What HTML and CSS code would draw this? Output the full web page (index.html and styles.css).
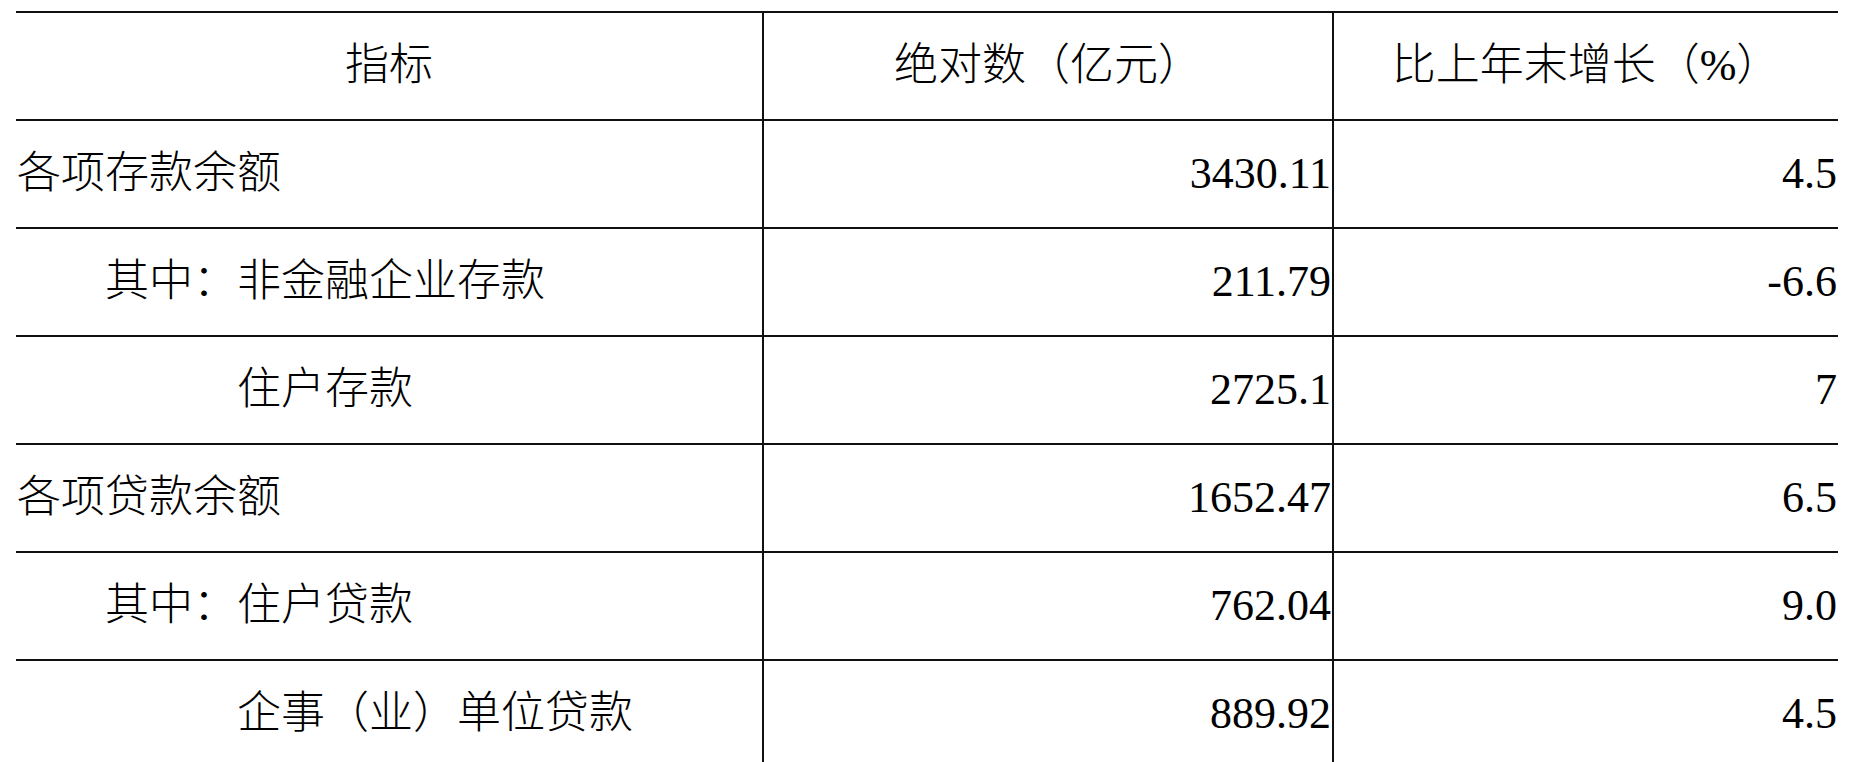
FILE: index.html
```html
<!DOCTYPE html>
<html lang="zh-CN">
<head>
<meta charset="utf-8">
<title>存贷款</title>
<link rel="stylesheet" href="styles.css">
</head>
<body>
<div class="page">
  <div class="sheet">
    <div class="cell head c1">指标</div>
    <div class="cell head c2">绝对数（亿元）</div>
    <div class="cell head c3">比上年末增长（%）</div>

    <div class="cell name c1">各项存款余额</div>
    <div class="cell num c2">3430.11</div>
    <div class="cell num c3">4.5</div>

    <div class="cell name c1 ind2">其中：非金融企业存款</div>
    <div class="cell num c2">211.79</div>
    <div class="cell num c3">-6.6</div>

    <div class="cell name c1 ind5">住户存款</div>
    <div class="cell num c2">2725.1</div>
    <div class="cell num c3">7</div>

    <div class="cell name c1">各项贷款余额</div>
    <div class="cell num c2">1652.47</div>
    <div class="cell num c3">6.5</div>

    <div class="cell name c1 ind2">其中：住户贷款</div>
    <div class="cell num c2">762.04</div>
    <div class="cell num c3">9.0</div>

    <div class="cell name c1 ind5">企事（业）单位贷款</div>
    <div class="cell num c2">889.92</div>
    <div class="cell num c3">4.5</div>
  </div>
</div>
</body>
</html>
```

FILE: styles.css
```css
html, body {
  margin: 0;
  padding: 0;
  background: #ffffff;
}

.page {
  padding: 11px 12px 0 16px;
}

.sheet {
  display: grid;
  grid-template-columns: 746px 570px 506px;
  grid-auto-rows: 108px;
  border-top: 2px solid #111;
  font-family: "Liberation Serif", "Noto Sans CJK SC", serif;
  font-size: 44px;
  font-weight: 300;
  color: #000;
}

.cell {
  box-sizing: border-box;
  border-bottom: 2px solid #111;
  display: flex;
  align-items: center;
  padding: 0;
  white-space: nowrap;
  line-height: 1;
}

.c2, .c3 {
  border-left: 2px solid #111;
}

.head {
  justify-content: center;
}

.name {
  justify-content: flex-start;
  padding-left: 1px;
}

.num {
  justify-content: flex-end;
  padding-right: 1px;
  font-weight: 400;
}

.ind2 {
  padding-left: 89px;
}

.ind5 {
  padding-left: 221px;
}
```
